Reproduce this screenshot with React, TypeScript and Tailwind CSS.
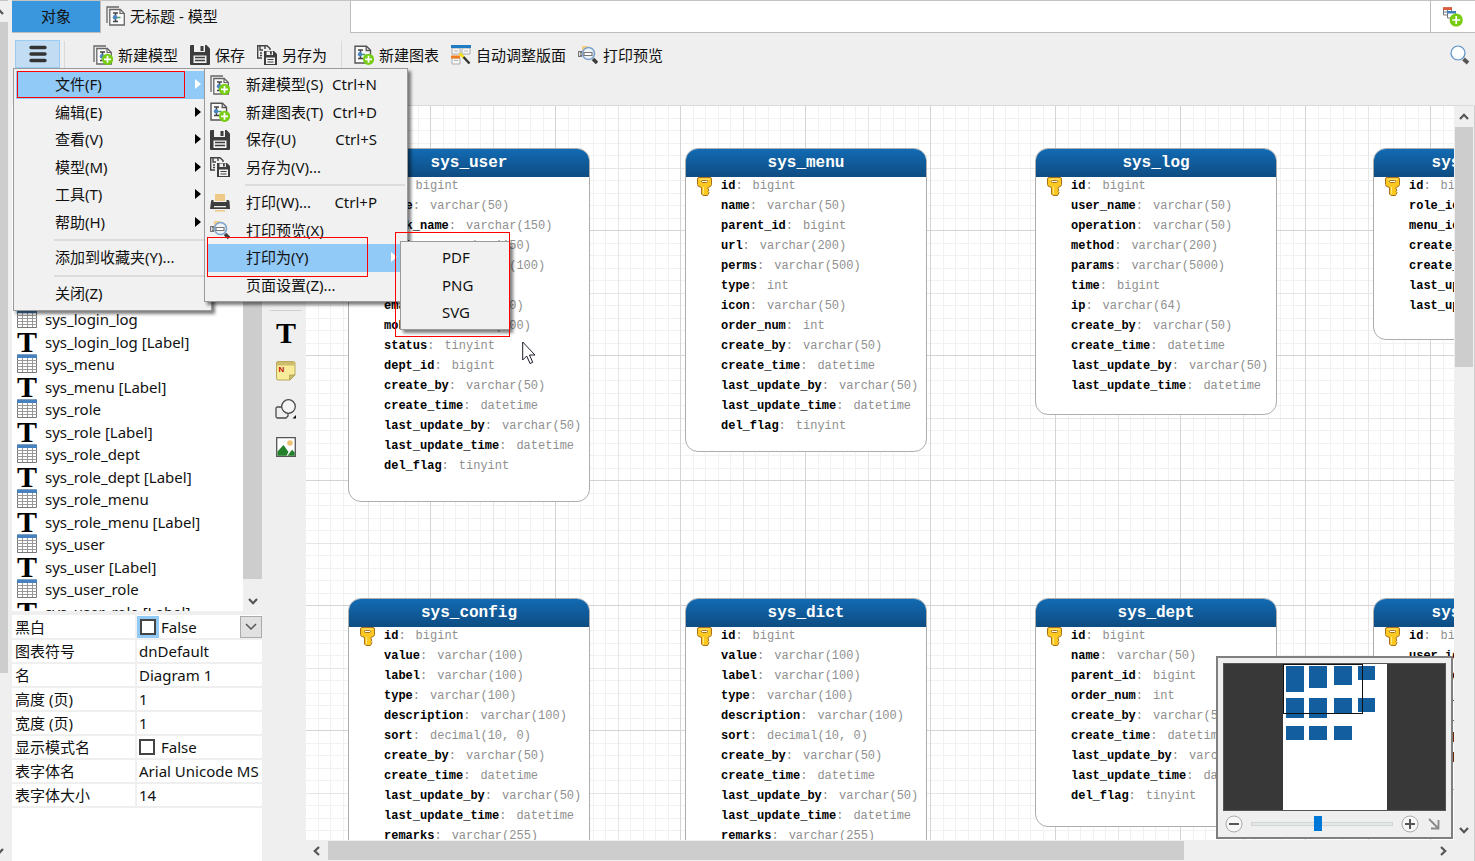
import React from "react";

type Column = [name: string, type: string];

interface Entity {
  title: string;
  place: string;
  columns: Column[];
}

const audit: Column[] = [
  ["create_by", "varchar(50)"],
  ["create_time", "datetime"],
  ["last_update_by", "varchar(50)"],
  ["last_update_time", "datetime"],
];

const dictionaryColumns: Column[] = [
  ["id", "bigint"],
  ["value", "varchar(100)"],
  ["label", "varchar(100)"],
  ["type", "varchar(100)"],
  ["description", "varchar(100)"],
  ["sort", "decimal(10, 0)"],
  ...audit,
  ["remarks", "varchar(255)"],
  ["del_flag", "tinyint"],
];

const entities: Entity[] = [
  {
    title: "sys_user",
    place: "left-[42px] top-[42px] h-[354px]",
    columns: [
      ["id", "bigint"],
      ["name", "varchar(50)"],
      ["nick_name", "varchar(150)"],
      ["avatar", "varchar(150)"],
      ["password", "varchar(100)"],
      ["salt", "varchar(40)"],
      ["email", "varchar(100)"],
      ["mobile", "varchar(100)"],
      ["status", "tinyint"],
      ["dept_id", "bigint"],
      ...audit,
      ["del_flag", "tinyint"],
    ],
  },
  {
    title: "sys_menu",
    place: "left-[379px] top-[42px] h-[304px]",
    columns: [
      ["id", "bigint"],
      ["name", "varchar(50)"],
      ["parent_id", "bigint"],
      ["url", "varchar(200)"],
      ["perms", "varchar(500)"],
      ["type", "int"],
      ["icon", "varchar(50)"],
      ["order_num", "int"],
      ...audit,
      ["del_flag", "tinyint"],
    ],
  },
  {
    title: "sys_log",
    place: "left-[729px] top-[42px] h-[267px]",
    columns: [
      ["id", "bigint"],
      ["user_name", "varchar(50)"],
      ["operation", "varchar(50)"],
      ["method", "varchar(200)"],
      ["params", "varchar(5000)"],
      ["time", "bigint"],
      ["ip", "varchar(64)"],
      ...audit,
    ],
  },
  {
    title: "sys_role_menu",
    place: "left-[1067px] top-[42px] h-[192px]",
    columns: [["id", "bigint"], ["role_id", "bigint"], ["menu_id", "bigint"], ...audit],
  },
  { title: "sys_config", place: "left-[42px] top-[492px] h-[304px]", columns: dictionaryColumns },
  { title: "sys_dict", place: "left-[379px] top-[492px] h-[304px]", columns: dictionaryColumns },
  {
    title: "sys_dept",
    place: "left-[729px] top-[492px] h-[229px]",
    columns: [
      ["id", "bigint"],
      ["name", "varchar(50)"],
      ["parent_id", "bigint"],
      ["order_num", "int"],
      ...audit,
      ["del_flag", "tinyint"],
    ],
  },
  {
    title: "sys_user_role",
    place: "left-[1067px] top-[492px] h-[192px]",
    columns: [["id", "bigint"], ["user_id", "bigint"], ["role_id", "bigint"], ...audit],
  },
];

const treeTables = ["sys_login_log", "sys_menu", "sys_role", "sys_role_dept", "sys_role_menu", "sys_user", "sys_user_role"];

/* ---------- icons ---------- */

function PlusBadge() {
  return (
    <g>
      <circle cx="14.500" cy="14.300" r="5.600" fill="#76cc11" />
      <path d="M14.500 10.800v7M11 14.300h7" stroke="#fff" strokeWidth="1.700" />
    </g>
  );
}

function DiagramMark() {
  return (
    <g>
      <path d="M6.500 5.500h5M6.500 14h5M9 5.500V14" stroke="#444" strokeWidth="1.500" fill="none" />
      <path d="M9 10h5" stroke="#4a9a6a" strokeWidth="1.500" />
      <circle cx="8.500" cy="9.800" r="2.200" fill="#4a86c5" />
    </g>
  );
}

function ModelIcon({ plus = false }: { plus?: boolean }) {
  return (
    <svg viewBox="0 0 20 20" className="size-5 shrink-0" fill="none" aria-hidden="true">
      <path d="M1 17V1h12" stroke="#666" strokeWidth="1.300" />
      <path d="M3.800 3.500h10.500l4 4V19H3.800z" fill="#fafafa" stroke="#666" strokeWidth="1.300" />
      <path d="M14 3.500v4h4" stroke="#666" strokeWidth="1.200" />
      <g transform="translate(.5 1.500)">
        <DiagramMark />
      </g>
      {plus && <PlusBadge />}
    </svg>
  );
}

function ChartIcon() {
  return (
    <svg viewBox="0 0 20 20" className="size-5 shrink-0" fill="none" aria-hidden="true">
      <path d="M1 1.200h11.500l4 4V18H1z" fill="#fafafa" stroke="#555" strokeWidth="1.400" />
      <path d="M12.200 1.200v4.300h4.300" stroke="#555" strokeWidth="1.300" />
      <g transform="translate(-2.500 -.5)">
        <DiagramMark />
      </g>
      <PlusBadge />
    </svg>
  );
}

function SaveIcon() {
  return (
    <svg viewBox="0 0 20 20" className="size-5 shrink-0" aria-hidden="true">
      <path d="M1 0h15.500L20 3.500V19a1 1 0 0 1-1 1H1a1 1 0 0 1-1-1V1a1 1 0 0 1 1-1z" fill="#3d3d3d" />
      <path d="M4 0h11v7H4zM3.500 10.500h13V18h-13z" fill="#f2f2f2" />
      <path d="M10.500 1h3v5h-3z" fill="#3d3d3d" />
      <path d="M5 12.500h10M5 15.500h10" stroke="#3d3d3d" strokeWidth="1.300" />
    </svg>
  );
}

function SaveAsIcon() {
  return (
    <svg viewBox="0 0 20 20" className="size-5 shrink-0" aria-hidden="true">
      <path d="M5 13H.7V.7H10L13 3.500V5" fill="none" stroke="#444" strokeWidth="1.400" />
      <path d="M3 1v4h3M8 1v3M3 8h2M3 10.500h2" stroke="#444" strokeWidth="1.400" fill="none" />
      <path d="M7 6h10l3 3v11H7z" fill="#3d3d3d" />
      <path d="M9.500 6.500h6.500V10H9.500zM9 12.500h9V19H9z" fill="#f2f2f2" />
      <path d="M13 6.500h1.800V9.500H13z" fill="#3d3d3d" />
      <path d="M10.500 14.500h6M10.500 17h6" stroke="#3d3d3d" strokeWidth="1.100" />
    </svg>
  );
}

function AutoLayoutIcon() {
  return (
    <svg viewBox="0 0 20 20" className="size-5 shrink-0" fill="none" aria-hidden="true">
      <path d="M1 3h8v6H1zM11 3h8v6h-8zM1 13h8v6H1z" fill="#f7f7f7" stroke="#aaa" />
      <path d="M3 6h4M13 6h4M3 15.500h4" stroke="#b5b5b5" />
      <path d="M0 0h20v3H0z" fill="#1e7cc4" />
      <path d="M0 10.500h9v3H0z" fill="#f47b20" />
      <path d="M8.500 8.500l4.500 4" stroke="#f5df16" strokeWidth="2.600" />
      <path d="M12.500 12l6 6.500" stroke="#333" strokeWidth="2.400" />
    </svg>
  );
}

function PreviewIcon() {
  return (
    <svg viewBox="0 0 20 20" className="size-5 shrink-0" fill="none" aria-hidden="true">
      <path d="M4 1h6v5H4z" fill="#f6cf86" />
      <path d="M0 6h4v6H0z" fill="#777" />
      <path d="M1.500 7v4M2 9h3" stroke="#ddd" />
      <circle cx="10.500" cy="8.500" r="6" fill="#eef3f8" stroke="#7ba3cc" strokeWidth="1.600" />
      <path d="M6 7.500h8v3H6z" fill="#fff" stroke="#777" strokeWidth="1.200" />
      <path d="M15 14l4 4" stroke="#3d3d3d" strokeWidth="3.600" />
    </svg>
  );
}

function PrinterIcon() {
  return (
    <svg viewBox="0 0 20 20" className="size-5 shrink-0" aria-hidden="true">
      <path d="M5 1h10v7H5z" fill="#efc986" />
      <path d="M1 8.500q0-1.500 1-1.500h1.500v2h13V7H18q1.500 0 1.500 1.500L20 16H0z" fill="#3d3d3d" />
      <path d="M4 13h12v1.300H4z" fill="#eee" />
      <path d="M5 17h10v1.500H5z" fill="#efc986" />
    </svg>
  );
}

function TableIcon() {
  return (
    <svg viewBox="0 0 20 20" className="size-5 shrink-0" fill="none" aria-hidden="true">
      <path d="M.5 1h19v17.500H.5z" fill="#fff" stroke="#777" />
      <path d="M0 6.500h20M0 9.500h20M0 12.500h20M0 15.500h20M5.500 4v14M10.500 4v14M15.500 4v14" stroke="#999" />
      <path d="M0 .5h20V4H0z" fill="#4682bf" />
    </svg>
  );
}

function TextMark() {
  return (
    <span aria-hidden="true" className="flex size-5 shrink-0 items-center justify-center font-['Liberation_Serif',serif] text-[30px] leading-5 font-bold text-black">
      T
    </span>
  );
}

function NoteIcon() {
  return (
    <svg viewBox="0 0 20 20" className="size-5" aria-hidden="true">
      <path d="M1.500.5h16q1.500 0 1.500 1.500v12l-5 5H2Q.5 19 .5 17.500V2Q.5.5 1.500.5z" fill="#f7ec9a" stroke="#b9a95a" />
      <path d="M1 1h17.500v3.500H1z" fill="#cdbd6c" />
      <path d="M13.500 18.500v-4.500H19z" fill="#cdbd6c" stroke="#a8984c" strokeWidth=".7" />
      <text x="2.500" y="10.500" fontSize="8" fontWeight="700" fontFamily="Liberation Sans, sans-serif" fill="#c00d0d">
        N
      </text>
    </svg>
  );
}

function ShapesIcon() {
  return (
    <svg viewBox="0 0 22 20" className="h-5 w-[22px]" fill="none" stroke="#4a4a4a" strokeWidth="1.300" aria-hidden="true">
      <path d="M7 8H2.500Q1 8 1 9.500v8Q1 19 2.500 19h8.500l2-2v-3" />
      <circle cx="13.500" cy="7.500" r="6.800" fill="#f4f4f4" />
      <path d="M21 16v3.500h-3.500z" fill="#111" stroke="none" />
    </svg>
  );
}

function PictureIcon() {
  return (
    <svg viewBox="0 0 20 20" className="size-5" aria-hidden="true">
      <path d="M.7.700h18.600v18.600H.7z" fill="#fff" stroke="#555" strokeWidth="1.300" />
      <circle cx="14" cy="6" r="2.800" fill="#efc274" />
      <path d="M1.500 18.700V14.500L7.500 8l5 7-2 3.700z" fill="#25802b" />
      <path d="M11.500 18.700l4.500-6 2.700 2.800v3.200z" fill="#25802b" />
    </svg>
  );
}

function KeyIcon() {
  return (
    <svg viewBox="0 0 15 19" className="h-[19px] w-[15px]" aria-hidden="true">
      <path d="M2 .5h11q1.500 0 1.500 1.500v5.500q0 1.500-1.500 2l-2 1v1.500l1 1-1 1.500 1 1-1.500 3H6l-1.500-1.500v-6.500L2 9.500Q.5 9 .5 7.500V2Q.5.5 2 .5z" fill="#fbc922" stroke="#a8701a" />
      <path d="M6.500 10v7M2.500 2.200h10" stroke="#ffe88a" fill="none" />
      <rect x="4.500" y="3.500" width="6" height="2" rx="1" fill="#fff" stroke="#a8701a" />
    </svg>
  );
}

function SearchIcon() {
  return (
    <svg viewBox="0 0 20 20" className="size-5" fill="none" aria-hidden="true">
      <circle cx="8" cy="8" r="7" fill="#fdfeff" stroke="#5a8fc6" strokeWidth="1.200" />
      <path d="M13.500 14l4.500 4" stroke="#555" strokeWidth="3.800" />
    </svg>
  );
}

function AddTableIcon() {
  return (
    <svg viewBox="0 0 20 20" className="size-5" fill="none" aria-hidden="true">
      <path d="M.5 1h8v7h-8zM.5 5h8M4.500 3v5" stroke="#777" />
      <path d="M0 .2h9V3H0z" fill="#db5a3c" />
      <path d="M4.500 5h8v6h-8z" fill="#fff" stroke="#777" />
      <path d="M4 4h9v2.500H4z" fill="#3f7fc0" />
      <circle cx="13.200" cy="13" r="6.600" fill="#76cc11" />
      <path d="M13.200 9v8M9.200 13h8" stroke="#fff" strokeWidth="1.700" />
    </svg>
  );
}

function Chevron({ turn = "" }: { turn?: string }) {
  return (
    <svg viewBox="0 0 10 10" className={`size-[10px] ${turn}`} fill="none" aria-hidden="true">
      <path d="M1 7l4-4.200L9 7" stroke="#555" strokeWidth="2.200" />
    </svg>
  );
}

function PointerIcon() {
  return (
    <svg viewBox="0 0 14 24" className="h-6 w-[14px]" aria-hidden="true">
      <path d="M.7 1v18l4-4 3.300 7.500 2.700-1.200L7.500 14H13z" fill="#fff" stroke="#1b1b2b" />
    </svg>
  );
}

/* ---------- menus ---------- */

interface Item {
  label: string;
  icon?: React.ReactNode;
  keys?: string;
  more?: boolean;
  active?: boolean;
  frame?: string;
}

const mainMenu: Item[][] = [
  [
    { label: "文件(F)", more: true, active: true, frame: "left-px top-0 h-[27px] w-[168px]" },
    { label: "编辑(E)", more: true },
    { label: "查看(V)", more: true },
    { label: "模型(M)", more: true },
    { label: "工具(T)", more: true },
    { label: "帮助(H)", more: true },
  ],
  [{ label: "添加到收藏夹(Y)..." }],
  [{ label: "关闭(Z)" }],
];

const fileMenu: Item[][] = [
  [
    { label: "新建模型(S)", keys: "Ctrl+N", icon: <ModelIcon plus /> },
    { label: "新建图表(T)", keys: "Ctrl+D", icon: <ChartIcon /> },
    { label: "保存(U)", keys: "Ctrl+S", icon: <SaveIcon /> },
    { label: "另存为(V)...", icon: <SaveAsIcon /> },
  ],
  [
    { label: "打印(W)...", keys: "Ctrl+P", icon: <PrinterIcon /> },
    { label: "打印预览(X)", icon: <PreviewIcon /> },
    { label: "打印为(Y)", more: true, active: true, frame: "left-0 -top-[7px] h-10 w-[161px]" },
    { label: "页面设置(Z)..." },
  ],
];

const exportMenu: Item[][] = [[{ label: "PDF" }, { label: "PNG" }, { label: "SVG" }]];

function Menu({ groups, className, children }: { groups: Item[][]; className: string; children?: React.ReactNode }) {
  return (
    <div role="menu" className={`absolute z-20 border border-[#9a9a9a] bg-[#f1f1f1] p-[2px] shadow-[3px_3px_3px_rgba(0,0,0,0.5)] ${className}`}>
      {groups.map((group, g) => (
        <React.Fragment key={g}>
          {g > 0 && (
            <div className="h-2 pt-[3px] pl-[38px]">
              <div className="border-t-2 border-[#dcdcdc]" />
            </div>
          )}
          <ul>
            {group.map((item) => (
              <li key={item.label} className="relative odd:h-7 even:h-[27px]">
                <button
                  type="button"
                  role="menuitem"
                  className={`flex h-full w-full items-center pr-2 pb-[2px] text-left whitespace-nowrap ${item.active ? "bg-[#91c9f7]" : ""}`}
                >
                  <span className="w-[39px] shrink-0 pt-px pl-[3px]">{item.icon}</span>
                  <span className="flex-1">{item.label}</span>
                  {item.keys && <span className="pr-5">{item.keys}</span>}
                  {item.more && (
                    <svg viewBox="0 0 6 10" className={`h-[10px] w-[6px] ${item.active ? "fill-white" : "fill-black"}`} aria-hidden="true">
                      <path d="M0 0l6 5-6 5z" />
                    </svg>
                  )}
                </button>
                {item.frame && <span className={`pointer-events-none absolute border border-[#f00] ${item.frame}`} />}
              </li>
            ))}
          </ul>
        </React.Fragment>
      ))}
      {children}
    </div>
  );
}

/* ---------- page parts ---------- */

function ToolButton({ icon, label }: { icon: React.ReactNode; label: string }) {
  return (
    <button type="button" className="flex items-center gap-[5px] whitespace-nowrap">
      {icon}
      {label}
    </button>
  );
}

function TabBar() {
  return (
    <div className="flex h-[33px] shrink-0 border-t border-[#c3c3c3]">
      <button type="button" className="w-[89px] border-r border-b border-[#bdbdbd] bg-[#3a96dd] pb-[2px]">
        对象
      </button>
      <button type="button" className="flex w-[249px] items-center gap-1 pb-[2px] pl-[5px]">
        <ModelIcon />
        无标题 - 模型
      </button>
      <div className="flex-1 border-b border-l border-[#bdbdbd] bg-white" />
      <button type="button" aria-label="新建" className="flex w-[45px] items-center border-b border-l border-[#bdbdbd] bg-white pl-3">
        <AddTableIcon />
      </button>
    </div>
  );
}

function Toolbar() {
  return (
    <div className="relative z-20 flex h-[72px] shrink-0 items-start pt-[7px] pr-[5px] pl-[3px]">
      <div className="relative">
        <button type="button" aria-label="菜单" aria-expanded="true" className="flex h-7 w-[45px] items-center justify-center border border-[#9cccf2] bg-[#c2dcf3]">
          <svg viewBox="0 0 18 18" className="size-[18px]" stroke="#333" strokeWidth="3.400" strokeLinecap="round" aria-hidden="true">
            <path d="M2 2.500h14M2 9h14M2 15.500h14" />
          </svg>
        </button>
        <Menu groups={mainMenu} className="top-full -left-[2px] w-[199px]">
          <Menu groups={fileMenu} className="-top-px left-[190px] w-[204px]">
            <Menu groups={exportMenu} className="top-[172px] left-[195px] w-[110px]">
              <span className="pointer-events-none absolute -top-[10px] right-[-1px] -bottom-[8px] -left-[6px] border border-[#f00]" />
            </Menu>
          </Menu>
        </Menu>
      </div>
      <div className="flex h-[30px] flex-1 items-center">
        <div className="ml-1 h-7 border-l border-[#dadada]" />
        <div className="ml-7 flex items-center gap-3">
          <ToolButton icon={<ModelIcon plus />} label="新建模型" />
          <ToolButton icon={<SaveIcon />} label="保存" />
          <ToolButton icon={<SaveAsIcon />} label="另存为" />
        </div>
        <div className="ml-[14px] h-7 border-l border-[#dadada]" />
        <div className="ml-3 flex items-center gap-3">
          <ToolButton icon={<ChartIcon />} label="新建图表" />
          <ToolButton icon={<AutoLayoutIcon />} label="自动调整版面" />
          <ToolButton icon={<PreviewIcon />} label="打印预览" />
        </div>
        <button type="button" aria-label="搜索" className="ml-auto">
          <SearchIcon />
        </button>
      </div>
    </div>
  );
}

function Tree() {
  return (
    <div className="flex min-h-0 flex-1 overflow-hidden bg-white">
      <ul className="flex-1 overflow-hidden pt-[203px] pl-[5px]">
        {treeTables.map((name) => (
          <React.Fragment key={name}>
            <li className="flex h-[22px] items-center gap-2 whitespace-nowrap">
              <TableIcon />
              {name}
            </li>
            <li className="flex h-[23px] items-center gap-2 whitespace-nowrap">
              <TextMark />
              {name} [Label]
            </li>
          </React.Fragment>
        ))}
      </ul>
      <div className="flex w-[19px] flex-col items-center bg-[#efefef]">
        <div className="w-full flex-1 bg-[#cdcdcd]" />
        <div className="flex h-8 items-center pt-3">
          <Chevron turn="rotate-180" />
        </div>
      </div>
    </div>
  );
}

function Property({ name, children }: { name: string; children: React.ReactNode }) {
  return (
    <tr className="h-6 border-b-2 border-[#efefef]">
      <th scope="row" className="w-[124px] border-r-2 border-[#efefef] pl-[3px] text-left font-normal">
        {name}
      </th>
      <td className="overflow-hidden pl-[2px] whitespace-nowrap">{children}</td>
    </tr>
  );
}

function Properties() {
  const box = "size-4 appearance-none border-2 border-[#444] bg-white";
  return (
    <div className="mt-1 h-[246px] shrink-0 bg-white">
      <table className="w-full table-fixed border-collapse leading-[22px]">
        <tbody>
          <Property name="黑白">
            <div className="-ml-[2px] flex h-[22px] items-center">
              <label className="flex flex-1 items-center gap-[2px]">
                <span className="flex size-[22px] items-center justify-center bg-[#91c9f7]">
                  <input type="checkbox" className={box} />
                </span>
                False
              </label>
              <button type="button" aria-label="展开" className="flex size-[22px] items-center justify-center border border-[#aaa] bg-[#e1e1e1]">
                <svg viewBox="0 0 12 8" className="h-2 w-3" fill="none" stroke="#555" strokeWidth="1.500" aria-hidden="true">
                  <path d="M1 1l5 5 5-5" />
                </svg>
              </button>
            </div>
          </Property>
          <Property name="图表符号">dnDefault</Property>
          <Property name="名">Diagram 1</Property>
          <Property name="高度 (页)">1</Property>
          <Property name="宽度 (页)">1</Property>
          <Property name="显示模式名">
            <label className="flex h-[22px] items-center gap-[6px]">
              <input type="checkbox" className={box} />
              False
            </label>
          </Property>
          <Property name="表字体名">Arial Unicode MS</Property>
          <Property name="表字体大小">14</Property>
        </tbody>
      </table>
    </div>
  );
}

function Palette() {
  return (
    <div className="flex w-11 shrink-0 flex-col items-center gap-[18px] pt-[205px] pl-1">
      <div className="-mb-[6px] w-8 border-t border-[#d0d0d0]" />
      <button type="button" aria-label="标签" className="h-5">
        <TextMark />
      </button>
      <button type="button" aria-label="注释" className="h-5">
        <NoteIcon />
      </button>
      <button type="button" aria-label="形状" className="h-5">
        <ShapesIcon />
      </button>
      <button type="button" aria-label="图像" className="h-5">
        <PictureIcon />
      </button>
    </div>
  );
}

function EntityCard({ title, place, columns }: Entity) {
  return (
    <section className={`absolute w-[242px] overflow-hidden rounded-[13px] border border-[#adadad] bg-white ${place}`}>
      <h2 className="flex h-7 items-center justify-center bg-linear-to-b from-[#126bb3] to-[#0e4c82] text-[16px] font-bold text-white">{title}</h2>
      <div className="absolute top-7 left-[11px]">
        <KeyIcon />
      </div>
      <ul className="-mt-px pl-[35px] text-[12px] leading-5 whitespace-nowrap">
        {columns.map(([name, type]) => (
          <li key={name} className="flex gap-[10px] text-[#8f8f8f]">
            <span>
              <b className="text-black">{name}</b>:
            </span>
            <span>{type}</span>
          </li>
        ))}
      </ul>
    </section>
  );
}

const minorLines = [13, 25, 38, 50, 75, 88, 100, 113];

function CanvasGrid() {
  return (
    <svg className="absolute inset-0 size-full" aria-hidden="true">
      <defs>
        <pattern id="grid" width="125" height="125" patternUnits="userSpaceOnUse">
          {minorLines.map((n) => (
            <path key={n} d={`M${n - 0.5} 0V125M0 ${n - 0.5}H125`} stroke="#f1f1f1" />
          ))}
          <path d="M62.500 0V125M0 62.500H125" stroke="#e6e6e6" />
          <path d="M124.500 0V125M0 124.500H125" stroke="#d4d4d4" />
        </pattern>
      </defs>
      <rect width="100%" height="100%" fill="url(#grid)" />
    </svg>
  );
}

const thumbnails = [
  [3, 2, 18, 26], [26, 2, 18, 22], [51, 2, 18, 19], [75, 2, 17, 14],
  [3, 34, 18, 20], [26, 34, 18, 20], [51, 34, 18, 16], [75, 34, 17, 14],
  [3, 62, 18, 14], [26, 62, 18, 14], [51, 62, 18, 14],
];

function Overview() {
  return (
    <div className="absolute right-px bottom-px z-10 w-[237px] border-2 border-[#7f7f7f] bg-[#efefef] px-[5px] pt-[5px]">
      <div className="flex h-[148px] justify-center border border-[#555] bg-[#383838]">
        <svg viewBox="0 0 104 146" className="h-full w-[104px]" aria-hidden="true">
          <rect width="104" height="146" fill="#fff" />
          {thumbnails.map(([x, y, w, h]) => (
            <rect key={`${x}-${y}`} x={x} y={y} width={w} height={h} fill="#125e9e" />
          ))}
          <rect x=".5" y=".5" width="79" height="49" fill="none" stroke="#111" />
        </svg>
      </div>
      <div className="flex h-[26px] items-center gap-2 pr-[3px] pl-[2px]">
        <button type="button" aria-label="缩小">
          <svg viewBox="0 0 18 18" className="size-[18px]" aria-hidden="true">
            <circle cx="9" cy="9" r="8" fill="#f7f7f7" stroke="#aaa" />
            <path d="M4 9h10" stroke="#555" strokeWidth="2" />
          </svg>
        </button>
        <input
          type="range"
          aria-label="缩放"
          defaultValue={47}
          className="h-[15px] min-w-0 flex-1 appearance-none bg-transparent [&::-webkit-slider-runnable-track]:h-1 [&::-webkit-slider-runnable-track]:border [&::-webkit-slider-runnable-track]:border-[#d3d6d6] [&::-webkit-slider-runnable-track]:bg-[#e4e8e8] [&::-webkit-slider-thumb]:-mt-[7px] [&::-webkit-slider-thumb]:h-[15px] [&::-webkit-slider-thumb]:w-2 [&::-webkit-slider-thumb]:appearance-none [&::-webkit-slider-thumb]:bg-[#0078d7]"
        />
        <button type="button" aria-label="放大">
          <svg viewBox="0 0 18 18" className="size-[18px]" aria-hidden="true">
            <circle cx="9" cy="9" r="8" fill="#f7f7f7" stroke="#aaa" />
            <path d="M4 9h10M9 4v10" stroke="#555" strokeWidth="2" />
          </svg>
        </button>
        <button type="button" aria-label="收起">
          <svg viewBox="0 0 16 12" className="h-3 w-4" fill="none" stroke="#888" strokeWidth="1.800" aria-hidden="true">
            <path d="M2 1l9 9M11.500 2v8.500H4" />
          </svg>
        </button>
      </div>
    </div>
  );
}

function DiagramArea() {
  return (
    <div className="flex min-w-0 flex-1 flex-col border-t border-[#dadada]">
      <div className="flex min-h-0 flex-1">
        <main className="relative flex-1 overflow-hidden bg-white font-['Liberation_Mono',monospace]">
          <CanvasGrid />
          {entities.map((entity) => (
            <EntityCard key={entity.title} {...entity} />
          ))}
          <div className="absolute top-[235px] left-[216px]">
            <PointerIcon />
          </div>
          <Overview />
        </main>
        <div className="flex w-[21px] flex-col items-center border-r border-[#d0d0d0] pr-px pl-px">
          <div className="flex h-[21px] items-center">
            <Chevron />
          </div>
          <div className="h-[240px] w-full bg-[#cdcdcd]" />
          <div className="mt-auto pb-[5px]">
            <Chevron turn="rotate-180" />
          </div>
        </div>
      </div>
      <div className="flex h-[21px] shrink-0 items-center border-r border-[#d0d0d0]">
        <div className="flex w-[22px] justify-center">
          <Chevron turn="-rotate-90" />
        </div>
        <div className="flex h-[19px] flex-1">
          <div className="w-[78%] bg-[#cdcdcd]" />
        </div>
        <div className="flex w-[48px] pl-3">
          <Chevron turn="rotate-90" />
        </div>
      </div>
    </div>
  );
}

export default function App() {
  return (
    <div className="flex h-screen overflow-hidden bg-[#efefef] font-['Noto_Sans','Noto_Sans_CJK_SC',sans-serif] text-[15px] leading-5 text-[#111]">
      <div className="mr-1 flex w-2 shrink-0 flex-col overflow-hidden border-t border-[#c3c3c3]">
        <div className="-ml-[6px] flex h-[21px] items-center">
          <Chevron />
        </div>
        <div className="h-[651px] bg-[#cdcdcd]" />
        <div className="mt-auto -ml-[6px] pb-[5px]">
          <Chevron turn="rotate-180" />
        </div>
      </div>
      <div className="flex min-w-0 flex-1 flex-col">
        <TabBar />
        <Toolbar />
        <div className="flex min-h-0 flex-1">
          <aside className="flex w-[250px] shrink-0 flex-col">
            <Tree />
            <Properties />
          </aside>
          <Palette />
          <DiagramArea />
        </div>
      </div>
    </div>
  );
}
